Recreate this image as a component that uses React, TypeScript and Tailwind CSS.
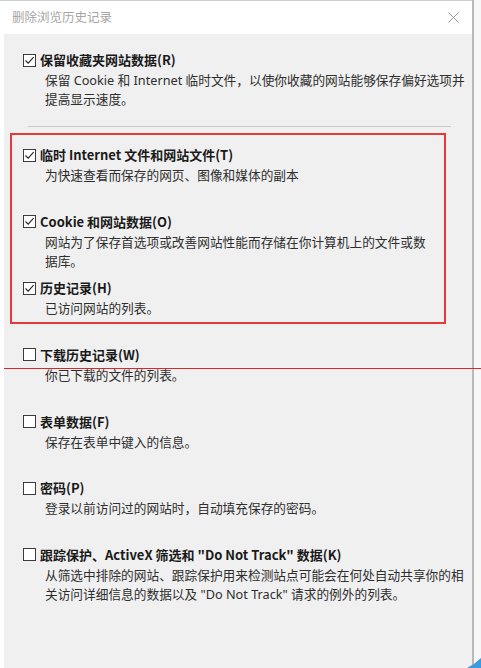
import React from "react";

const FONT = { fontFamily: '"Noto Sans CJK SC", "Noto Sans", sans-serif' };
const DESC_FONT = { fontFamily: '"Noto Sans", "Noto Sans CJK SC", sans-serif' };

function Box({ checked }: { checked: boolean }) {
  return (
    <div className="w-[13px] h-[13px] shrink-0 border border-[#3c3c3c] bg-white flex items-center justify-center">
      {checked && (
        <svg width="11" height="11" viewBox="0 0 11 11">
          <path d="M1.5 5.5 L4.2 8.2 L9.6 2.2" fill="none" stroke="#222" strokeWidth="1.1" />
        </svg>
      )}
    </div>
  );
}

function Item({
  checked,
  label,
  desc,
  slot = true,
}: {
  checked: boolean;
  label: string;
  desc: React.ReactNode;
  slot?: boolean;
}) {
  return (
    <div className={slot ? "h-[66.67px]" : ""}>
      <div className="flex items-center h-[20px] gap-[4px]">
        <Box checked={checked} />
        <span className="text-[13px] font-bold text-[#1a1a1a] whitespace-nowrap leading-[20px]">{label}</span>
      </div>
      <div
        className="mt-[1px] pl-[22px] text-[12.7px] leading-[19px] text-[#2e2e2e] whitespace-nowrap"
        style={DESC_FONT}
      >
        {desc}
      </div>
    </div>
  );
}

export default function App() {
  return (
    <div className="relative w-[481px] h-[668px] bg-[#fbfbfb] overflow-hidden" style={FONT}>
      <div className="flex h-full">
        <div className="w-[472px] flex flex-col h-full border-t border-[#cfcfcf]">
          <div className="h-[33px] bg-white flex items-center justify-between pl-[12px] pr-[13px]">
            <span className="text-[12.5px] text-[#a6a6a6]">删除浏览历史记录</span>
            <svg width="11" height="11" viewBox="0 0 11 11">
              <path d="M0.5 0.5 L10.5 10.5 M10.5 0.5 L0.5 10.5" stroke="#9a9a9a" strokeWidth="1" />
            </svg>
          </div>
          <div className="flex flex-1">
            <div className="w-[4px] bg-white" />
            <div className="flex-1 bg-[#f0f0f0] pl-[19px] pt-[16px]">
              <Item
                checked
                slot={false}
                label="保留收藏夹网站数据(R)"
                desc={
                  <>
                    保留 Cookie 和 Internet 临时文件，以使你收藏的网站能够保存偏好选项并
                    <br />
                    提高显示速度。
                  </>
                }
              />
              <div className="mt-[17px] mb-[18px] ml-[5px] mr-[21px] h-[1px] bg-[#c9c9c9]" />
              <Item checked label="临时 Internet 文件和网站文件(T)" desc="为快速查看而保存的网页、图像和媒体的副本" />
              <Item
                checked
                label="Cookie 和网站数据(O)"
                desc={
                  <>
                    网站为了保存首选项或改善网站性能而存储在你计算机上的文件或数
                    <br />
                    据库。
                  </>
                }
              />
              <Item checked label="历史记录(H)" desc="已访问网站的列表。" />
              <Item checked={false} label="下载历史记录(W)" desc="你已下载的文件的列表。" />
              <Item checked={false} label="表单数据(F)" desc="保存在表单中键入的信息。" />
              <Item checked={false} label="密码(P)" desc="登录以前访问过的网站时，自动填充保存的密码。" />
              <Item
                checked={false}
                label={'跟踪保护、ActiveX 筛选和 "Do Not Track" 数据(K)'}
                desc={
                  <>
                    从筛选中排除的网站、跟踪保护用来检测站点可能会在何处自动共享你的相
                    <br />
                    关访问详细信息的数据以及 "Do Not Track" 请求的例外的列表。
                  </>
                }
              />
            </div>
          </div>
        </div>
        <div className="w-[2px] h-full bg-[#b9b9b9]" />
        <div className="flex-1 h-full bg-[#f7f7f7]" />
      </div>

      <div className="absolute left-[10px] top-[133px] w-[436px] h-[191px] border-2 border-[#e5393b] pointer-events-none" />
      <div className="absolute left-[4px] right-0 top-[368px] h-[1px] bg-[#d42a2a]" />
      <svg className="absolute right-0 bottom-0" width="14" height="10" viewBox="0 0 14 10">
        <path d="M0 10 Q8 6 14 0 L14 10 Z" fill="#3b9be0" />
      </svg>
    </div>
  );
}
